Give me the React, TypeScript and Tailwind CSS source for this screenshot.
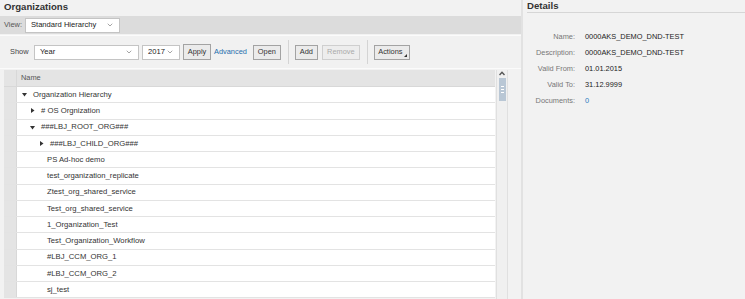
import { FC, ReactNode } from "react";
import { ChevronDown } from "lucide-react";

interface TreeRow {
  label: string;
  level: number;
  toggle?: "open" | "closed";
}

const rows: TreeRow[] = [
  { label: "Organization Hierarchy", level: 0, toggle: "open" },
  { label: "# OS Orgnization", level: 1, toggle: "closed" },
  { label: "###LBJ_ROOT_ORG###", level: 1, toggle: "open" },
  { label: "###LBJ_CHILD_ORG###", level: 2, toggle: "closed" },
  { label: "PS Ad-hoc demo", level: 2 },
  { label: "test_organization_replicate", level: 2 },
  { label: "Ztest_org_shared_service", level: 2 },
  { label: "Test_org_shared_service", level: 2 },
  { label: "1_Organization_Test", level: 2 },
  { label: "Test_Organization_Workflow", level: 2 },
  { label: "#LBJ_CCM_ORG_1", level: 2 },
  { label: "#LBJ_CCM_ORG_2", level: 2 },
  { label: "sj_test", level: 2 },
];

const details = [
  { label: "Name:", value: "0000AKS_DEMO_DND-TEST" },
  { label: "Description:", value: "0000AKS_DEMO_DND-TEST" },
  { label: "Valid From:", value: "01.01.2015" },
  { label: "Valid To:", value: "31.12.9999" },
  { label: "Documents:", value: "0", link: true },
];

// left padding of the toggle for each tree level
const indent = ["pl-[5px]", "pl-[13px]", "pl-[22px]"];

const Select: FC<{ value: string; className: string }> = ({ value, className }) => (
  <div
    className={`flex items-center justify-between h-[15px] bg-white border border-[#c4c4c4] pl-[5px] pr-[5px] text-[7.6px] text-[#222] ${className}`}
  >
    <span>{value}</span>
    <ChevronDown size={8} strokeWidth={2} className="text-[#777]" />
  </div>
);

const Button: FC<{ children: ReactNode; disabled?: boolean; className?: string }> = ({
  children,
  disabled,
  className = "",
}) => (
  <div
    className={`relative flex items-center justify-center h-[15px] text-[7.4px] border ${
      disabled ? "border-[#cfcfcf] text-[#aaaaaa] bg-[#ededed]" : "border-[#a3a3a3] text-[#333] bg-[#ebebeb]"
    } ${className}`}
  >
    {children}
  </div>
);

const Triangle: FC<{ open: boolean }> = ({ open }) => (
  <svg width="5" height="5" viewBox="0 0 5 5" className="shrink-0">
    {open ? <path d="M0 1 L5 1 L2.5 4.5 Z" fill="#333" /> : <path d="M1 0 L4.5 2.5 L1 5 Z" fill="#333" />}
  </svg>
);

export default function App() {
  return (
    <div
      className="flex w-[745px] h-[299px] overflow-hidden bg-[#f2f2f2] text-[#333]"
      style={{ fontFamily: '"Liberation Sans", Arial, sans-serif' }}
    >
      {/* left pane */}
      <div className="flex flex-col w-[521px] shrink-0">
        <div className="h-[16px] pl-[4px] text-[9.6px] font-bold leading-[14px] text-[#333]">Organizations</div>
        <div className="flex items-center h-[18px] bg-[#dcdcdc] pl-[4px] gap-[3px]">
          <span className="text-[7.4px] text-[#555]">View:</span>
          <Select value="Standard Hierarchy" className="w-[95px] h-[14px]" />
        </div>
        <div className="flex items-center h-[34px] mt-[1px] bg-[#f1f1f1] border-t border-b border-[#fbfbfb] pl-[10px]">
          <span className="text-[7.4px] text-[#444] w-[24px]">Show</span>
          <Select value="Year" className="w-[105px]" />
          <Select value="2017" className="w-[38px] ml-[3px]" />
          <Button className="ml-[3px] w-[28px] h-[16px] bg-[#e0e0e0] border-[#9a9a9a]">Apply</Button>
          <span className="ml-[3px] text-[7.4px] text-[#1f6fad]">Advanced</span>
          <Button className="ml-[6px] w-[28px]">Open</Button>
          <div className="w-px h-[24px] bg-[#d4d4d4] ml-[7px]" />
          <Button className="ml-[6px] w-[23px]">Add</Button>
          <Button disabled className="ml-[4px] w-[38px]">Remove</Button>
          <div className="w-px h-[24px] bg-[#d4d4d4] ml-[7px]" />
          <Button className="ml-[6px] w-[36px] pr-[3px]">
            Actions
            <svg width="3" height="3" viewBox="0 0 3 3" className="absolute right-[2px] bottom-[2px]">
              <path d="M3 0 L3 3 L0 3 Z" fill="#333" />
            </svg>
          </Button>
        </div>
        {/* table */}
        <div className="flex flex-1 mt-[1px] pl-[4px]">
          <div className="flex flex-col w-[491px]">
            <div className="flex h-[17px] shrink-0 bg-[#e4e4e4] border-b border-[#d8d8d8]">
              <div className="w-[13px] border-r border-[#d8d8d8]" />
              <span className="pl-[4px] text-[7.4px] leading-[16px] text-[#555]">Name</span>
            </div>
            {rows.map((row, i) => (
              <div key={i} className="flex h-[16.25px] shrink-0 bg-white border-b border-[#e3e3e3]">
                <div className="w-[13px] shrink-0 bg-[#e4e4e4] border-r border-[#d8d8d8]" />
                <div
                  className={`flex items-center text-[7.7px] text-[#333] ${row.toggle ? indent[row.level] : "pl-[30px]"}`}
                >
                  {row.toggle && <Triangle open={row.toggle === "open"} />}
                  <span className={row.toggle ? "ml-[6px]" : ""}>{row.label}</span>
                </div>
              </div>
            ))}
          </div>
          {/* scrollbar */}
          <div className="flex flex-col items-center w-[12px] ml-[1px] border-l border-r border-[#e0e0e0] bg-[#f0f0f0] pt-[1px]">
            <svg width="6" height="5" viewBox="0 0 6 5">
              <path d="M0.5 4 L3 1.2 L5.5 4" stroke="#555" strokeWidth="1.4" fill="none" />
            </svg>
            <div className="flex flex-col items-center justify-center gap-[2px] w-[7px] h-[23px] mt-[2px] bg-[#b9c7d5]">
              <div className="w-[3px] h-px bg-white" />
              <div className="w-[3px] h-px bg-white" />
              <div className="w-[3px] h-px bg-white" />
            </div>
          </div>
        </div>
      </div>

      {/* splitter */}
      <div className="w-[2px] bg-[#e2e2e2] shrink-0" />

      {/* right pane */}
      <div className="flex flex-col flex-1 pl-[4px]">
        <div className="h-[13px] text-[9.6px] font-bold leading-[12px] text-[#333] border-b border-[#d6d6d6]">Details</div>
        <div className="grid grid-cols-[48px_1fr] gap-x-[10px] mt-[16px] text-[7.4px] leading-[16px]">
          {details.map((d) => (
            <div key={d.label} className="contents">
              <span className="text-right text-[#777] whitespace-nowrap">{d.label}</span>
              <span className={d.link ? "text-[#2b7cc0]" : "text-[#222]"}>{d.value}</span>
            </div>
          ))}
        </div>
      </div>
    </div>
  );
}
